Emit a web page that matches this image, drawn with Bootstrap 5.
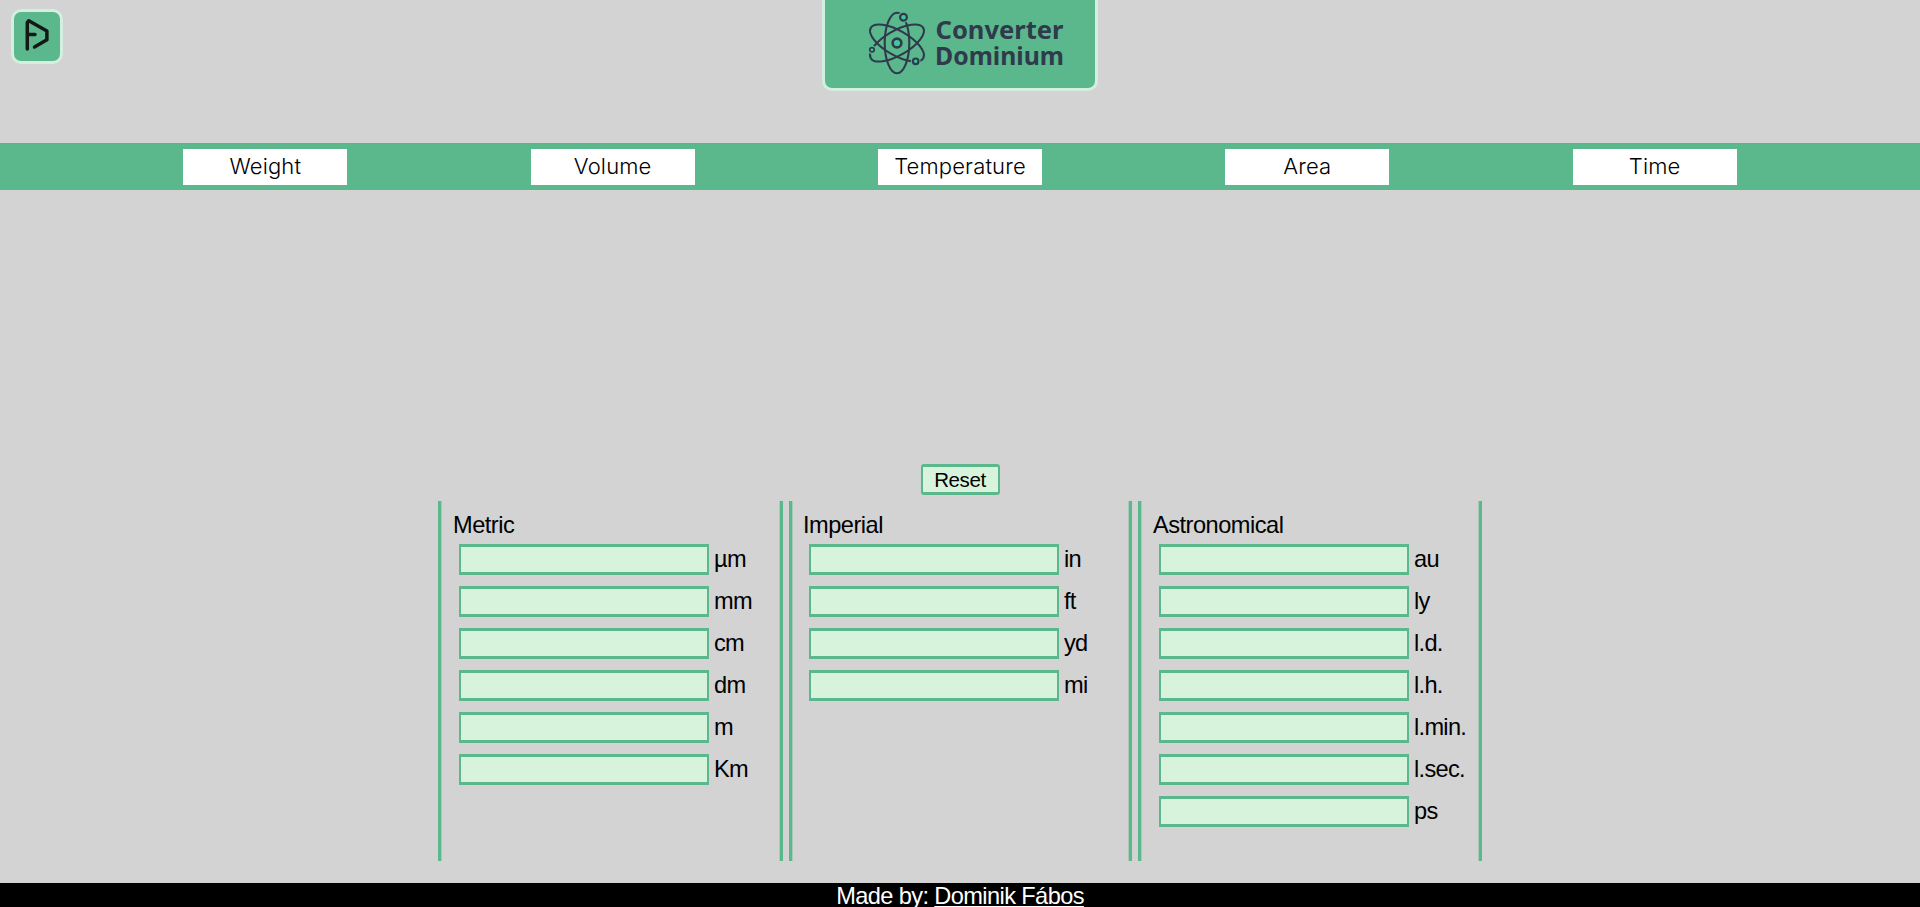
<!DOCTYPE html>
<html lang="en">
<head>
<meta charset="utf-8">
<meta name="viewport" content="width=device-width, initial-scale=1">
<title>Converter Dominium</title>
<link href="https://cdn.jsdelivr.net/npm/bootstrap@5.3.0/dist/css/bootstrap.min.css" rel="stylesheet">
<style>
  :root { --green: #5bb88d; --mint: #d8f3dc; }
  body { background: #d3d3d3; color: #000; font-family: "Liberation Sans", Arial, sans-serif; font-size: 23.6px; letter-spacing: -.5px; line-height: 26px; }
  .site-header { display: grid; grid-template-columns: 1fr 276px 1fr; height: 143px; }
  .home-logo { width: 52px; height: 55px; margin: 9px 0 0 11px; background: var(--green); border: 3px solid #d4eee0; border-radius: 10px; }
  .brand-logo { height: 91px; background: var(--green); border: 3px solid #d4eee0; border-top: 0; border-radius: 0 0 10px 10px; }
  .brand-logo svg, .home-logo svg { display: block; }
  .brand-logo text { font: 700 25px "Noto Sans", "Open Sans", sans-serif; letter-spacing: 0; fill: #2f3a4c; }
  .unit-nav { height: 47px; background: var(--green); padding-top: 6px; }
  .unit-nav .btn { width: 164px; height: 36px; background: #fff; color: #000; border: 0; border-radius: 0; padding: 0; font: 300 22px/35px Inter, sans-serif; letter-spacing: .15px; }
  .converter { height: 693px; padding-top: 274px; }
  .btn-reset { width: 79px; height: 31px; padding: 0; background: var(--mint); border: solid var(--green); border-width: 3px 2px; border-radius: 3px; color: #000; font-size: 20.5px; line-height: 26px; letter-spacing: -.4px; }
  .unit-grid { display: grid; grid-template-columns: 345px 343px 344px; gap: 6px; height: 360px; margin-top: 6px; }
  .unit-col { border: solid var(--green); border-width: 0 3px; padding: 11px 0 0 13px; box-shadow: inset 1px 0 rgba(91,184,141,.35), inset -1px 0 rgba(91,184,141,.35); }
  .unit-col h2 { font-size: inherit; line-height: 27px; font-weight: 400; margin: 0 0 5px -1px; }
  .unit-row { height: 31px; margin: 0 0 11px 5px; display: flex; gap: 5px; line-height: 30px; letter-spacing: -.7px; }
  .unit-row .form-control { width: 250px; height: 31px; padding: 0 4px; border: solid var(--green); border-width: 3px 2px; border-radius: 0; background: var(--mint); }
  .unit-col:nth-child(2) { padding-left: 12px; }
  .site-footer { height: 24px; background: #000; color: #fff; overflow: hidden; line-height: 26px; letter-spacing: -.6px; }
  .site-footer a { color: #fff; text-decoration-thickness: 1px; text-underline-offset: 2px; }
</style>
</head>
<body class="overflow-hidden">
<header class="site-header">
  <a class="home-logo" href="#" aria-label="Home">
    <svg width="46" height="49" viewBox="14 12 46 49" fill="none" stroke="#151716" stroke-width="3.5" stroke-linejoin="round" stroke-linecap="round">
      <path d="M27.3 49V22.5L28.8 20.7L46.9 31V39.8L34.5 47M27.3 34.6H35"/>
    </svg>
  </a>
  <div class="brand-logo">
    <svg width="270" height="88" viewBox="825 0 270 88">
      <g fill="none" stroke="#2f3a4c" stroke-width="2.1">
        <ellipse cx="897" cy="43" rx="12.3" ry="30.3"/>
        <ellipse cx="897" cy="43" rx="12.3" ry="30.3" transform="rotate(60 897 43)"/>
        <ellipse cx="897" cy="43" rx="12.3" ry="30.3" transform="rotate(-60 897 43)"/>
      </g>
      <g fill="#5bb88d">
        <circle cx="903.5" cy="17.2" r="5.6"/>
        <circle cx="872" cy="49.8" r="4.3"/>
        <circle cx="915.7" cy="61.3" r="4.8"/>
      </g>
      <g fill="#3fc79d" stroke="#2f3a4c" stroke-width="2.2">
        <circle cx="897" cy="43" r="4.4" stroke-width="2.6"/>
        <circle cx="903.5" cy="17.2" r="3.4"/>
        <circle cx="872" cy="49.8" r="2.2" stroke-width="1.7"/>
        <circle cx="915.7" cy="61.3" r="2.8"/>
      </g>
      <text x="935.5" y="39.3" textLength="128" lengthAdjust="spacingAndGlyphs">Converter</text>
      <text x="935" y="65" textLength="129" lengthAdjust="spacingAndGlyphs">Dominium</text>
    </svg>
  </div>
</header>
<nav class="unit-nav d-flex justify-content-evenly align-items-start">
  <a class="btn" href="#">Weight</a>
  <a class="btn" href="#">Volume</a>
  <a class="btn" href="#">Temperature</a>
  <a class="btn" href="#">Area</a>
  <a class="btn" href="#">Time</a>
</nav>
<main class="converter d-flex flex-column align-items-center">
  <button class="btn btn-reset" type="reset">Reset</button>
  <div class="unit-grid">
    <section class="unit-col">
      <h2>Metric</h2>
      <label class="unit-row"><input class="form-control"><span>µm</span></label>
      <label class="unit-row"><input class="form-control"><span>mm</span></label>
      <label class="unit-row"><input class="form-control"><span>cm</span></label>
      <label class="unit-row"><input class="form-control"><span>dm</span></label>
      <label class="unit-row"><input class="form-control"><span>m</span></label>
      <label class="unit-row"><input class="form-control"><span>Km</span></label>
    </section>
    <section class="unit-col">
      <h2>Imperial</h2>
      <label class="unit-row"><input class="form-control"><span>in</span></label>
      <label class="unit-row"><input class="form-control"><span>ft</span></label>
      <label class="unit-row"><input class="form-control"><span>yd</span></label>
      <label class="unit-row"><input class="form-control"><span>mi</span></label>
    </section>
    <section class="unit-col">
      <h2>Astronomical</h2>
      <label class="unit-row"><input class="form-control"><span>au</span></label>
      <label class="unit-row"><input class="form-control"><span>ly</span></label>
      <label class="unit-row"><input class="form-control"><span>l.d.</span></label>
      <label class="unit-row"><input class="form-control"><span>l.h.</span></label>
      <label class="unit-row"><input class="form-control"><span>l.min.</span></label>
      <label class="unit-row"><input class="form-control"><span>l.sec.</span></label>
      <label class="unit-row"><input class="form-control"><span>ps</span></label>
    </section>
  </div>
</main>
<footer class="site-footer text-center">Made by: <a href="#">Dominik Fábos</a></footer>
<script src="https://cdn.jsdelivr.net/npm/bootstrap@5.3.0/dist/js/bootstrap.bundle.min.js"></script>
</body>
</html>
